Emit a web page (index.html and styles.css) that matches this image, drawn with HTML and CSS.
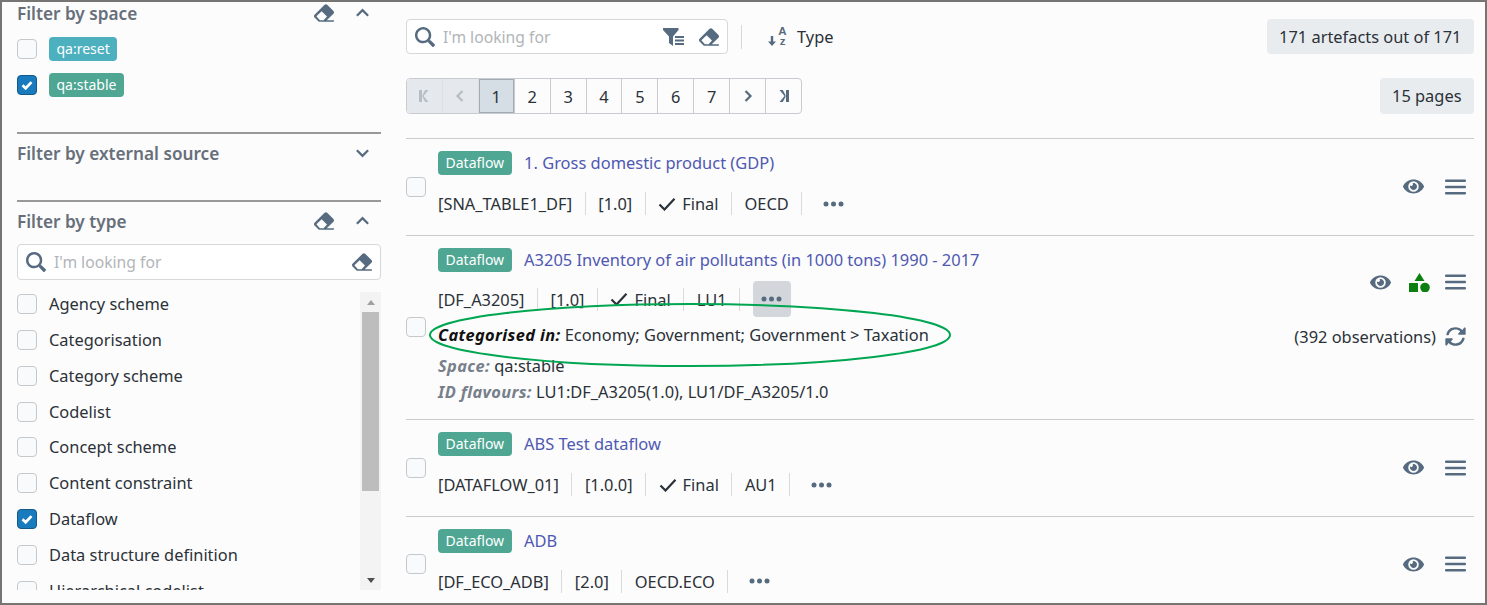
FILE: index.html
```html
<!DOCTYPE html>
<html lang="en">
<head>
    <meta charset="UTF-8">
    <meta name="viewport" content="width=device-width, initial-scale=1.0">
    <title>Artefacts</title>
    <link rel="stylesheet" href="styles.css">
</head>
<body>

<svg class="icon-defs" aria-hidden="true">
    <defs>
        <symbol id="i-eraser" viewBox="0 0 512 512"><path d="M497.941 273.941c18.745-18.745 18.745-49.137 0-67.882l-160-160c-18.745-18.745-49.137-18.745-67.882 0l-256 256c-18.745 18.745-18.745 49.137 0 67.882l96 96A48.004 48.004 0 0 0 144 480h356c6.627 0 12-5.373 12-12v-16c0-6.627-5.373-12-12-12H325.883l172.058-166.059zm-302.627-62.627l137.373 137.373L245.373 440H150.628l-90-104 134.686-124.686z"/></symbol>
        <symbol id="i-search" viewBox="0 0 512 512"><path d="M505 442.7L405.3 343c-4.5-4.5-10.6-7-17-7H372c27.6-35.3 44-79.7 44-128C416 93.1 322.9 0 208 0S0 93.1 0 208s93.1 208 208 208c48.3 0 92.7-16.4 128-44v16.3c0 6.4 2.5 12.5 7 17l99.7 99.7c9.4 9.4 24.6 9.4 33.9 0l28.3-28.3c9.4-9.4 9.4-24.6.1-34zM208 352c-79.7 0-144-64.2-144-144 0-79.7 64.2-144 144-144 79.700 0 144 64.200 144 144 0 79.700-64.300 144-144 144z"/></symbol>
        <symbol id="i-eye" viewBox="0 0 576 512"><path d="M572.52 241.4C518.29 135.59 410.93 64 288 64S57.68 135.64 3.48 241.41a32.35 32.35 0 0 0 0 29.19C57.71 376.41 165.07 448 288 448s230.32-71.64 284.52-177.41a32.35 32.35 0 0 0 0-29.19zM288 400a144 144 0 1 1 144-144 143.93 143.93 0 0 1-144 144zm0-240a95.31 95.31 0 0 0-25.31 3.79 47.85 47.85 0 0 1-66.9 66.9A95.78 95.78 0 1 0 288 160z"/></symbol>
        <symbol id="i-bars" viewBox="0 0 21 16"><rect x="0" y="0.500" width="21" height="2.400" rx="1"/><rect x="0" y="6.800" width="21" height="2.400" rx="1"/><rect x="0" y="13.100" width="21" height="2.400" rx="1"/></symbol>
        <symbol id="i-sync" viewBox="0 0 512 512"><path d="M370.72 133.28C339.458 104.008 298.888 87.962 255.848 88c-77.458.068-144.328 53.178-162.791 126.85-1.344 5.363-6.122 9.15-11.651 9.15H44.103c-7.498 0-13.194-6.807-11.807-14.176C53.933 94.924 134.813 28 256 28c66.448 0 126.791 26.136 171.315 68.685L463.03 40.97C478.149 25.851 504 36.559 504 57.941V192c0 13.255-10.745 24-24 24H345.941c-21.382 0-32.09-25.851-16.971-40.971l41.75-41.749zM32 296h134.059c21.382 0 32.09 25.851 16.971 40.971l-41.75 41.75c31.262 29.273 71.835 45.319 114.876 45.28 77.418-.07 144.315-53.144 162.787-126.849 1.344-5.363 6.122-9.15 11.651-9.15h37.304c7.498 0 13.194 6.807 11.807 14.176C458.067 397.076 377.187 484 256 484c-66.448 0-126.791-26.136-171.315-68.685L48.97 471.03C33.851 486.149 8 475.441 8 454.059V320c0-13.255 10.745-24 24-24z"/></symbol>
        <symbol id="i-tick" viewBox="0 0 18 14"><path d="M1.500 7.500l5 5L16.500 1.800" fill="none" stroke="currentColor" stroke-width="2.200"/></symbol>
        <symbol id="i-box-tick" viewBox="0 0 20 20"><path d="M5 10.300l3.500 3.300L15 6.800" fill="none" stroke="#fff" stroke-width="3"/></symbol>
        <symbol id="i-up" viewBox="0 0 16 10"><path d="M2 8l6-6 6 6" fill="none" stroke="currentColor" stroke-width="2.400"/></symbol>
        <symbol id="i-down" viewBox="0 0 16 10"><path d="M2 2l6 6 6-6" fill="none" stroke="currentColor" stroke-width="2.400"/></symbol>
        <symbol id="i-dots" viewBox="0 0 21 6"><circle cx="3" cy="3" r="2.500"/><circle cx="10.500" cy="3" r="2.500"/><circle cx="18" cy="3" r="2.500"/></symbol>
    </defs>
</svg>

<div class="frame">

    <aside class="sidebar">
        <section class="filter filter-first">
            <div class="filter-head">
                <span class="filter-title">Filter by space</span>
                <svg class="ico eraser"><use href="#i-eraser"/></svg>
                <svg class="ico chevron"><use href="#i-up"/></svg>
            </div>
            <div class="space-list">
                <div class="option">
                    <span class="check"></span>
                    <span class="tag tag-reset">qa:reset</span>
                </div>
                <div class="option">
                    <span class="check on"><svg><use href="#i-box-tick"/></svg></span>
                    <span class="tag tag-stable">qa:stable</span>
                </div>
            </div>
        </section>

        <section class="filter filter-closed">
            <div class="filter-head">
                <span class="filter-title">Filter by external source</span>
                <svg class="ico chevron"><use href="#i-down"/></svg>
            </div>
        </section>

        <section class="filter">
            <div class="filter-head">
                <span class="filter-title">Filter by type</span>
                <svg class="ico eraser"><use href="#i-eraser"/></svg>
                <svg class="ico chevron"><use href="#i-up"/></svg>
            </div>
            <div class="search search-side">
                <svg class="ico search-ico"><use href="#i-search"/></svg>
                <span class="placeholder">I'm looking for</span>
                <svg class="ico eraser"><use href="#i-eraser"/></svg>
            </div>
            <div class="list-box">
                <div class="type-list">
                    <div class="option"><span class="check"></span>Agency scheme</div>
                    <div class="option"><span class="check"></span>Categorisation</div>
                    <div class="option"><span class="check"></span>Category scheme</div>
                    <div class="option"><span class="check"></span>Codelist</div>
                    <div class="option"><span class="check"></span>Concept scheme</div>
                    <div class="option"><span class="check"></span>Content constraint</div>
                    <div class="option"><span class="check on"><svg><use href="#i-box-tick"/></svg></span>Dataflow</div>
                    <div class="option"><span class="check"></span>Data structure definition</div>
                    <div class="option"><span class="check"></span>Hierarchical codelist</div>
                </div>
                <div class="scrollbar">
                    <span class="arrow arrow-up"></span>
                    <span class="thumb"></span>
                    <span class="arrow arrow-down"></span>
                </div>
            </div>
        </section>
    </aside>

    <main class="content">
        <div class="toolbar">
            <div class="search search-main">
                <svg class="ico search-ico"><use href="#i-search"/></svg>
                <span class="placeholder">I'm looking for</span>
                <svg class="ico filter-ico" viewBox="0 0 22 18">
                    <path d="M0 0h15.500v2L10 8.500V18L6 15V8.500L0 2z"/>
                    <rect x="12" y="8" width="9" height="2"/>
                    <rect x="12" y="11.500" width="9" height="2"/>
                    <rect x="12" y="15" width="9" height="2"/>
                </svg>
                <svg class="ico eraser"><use href="#i-eraser"/></svg>
            </div>
            <span class="tool-sep"></span>
            <div class="sort-ico">
                <svg class="ico sort-arrow" viewBox="0 0 8 10"><path d="M2.800 0v5.500H0L4 10l4-4.500H5.200V0z"/></svg>
                <div class="sort-letters"><span class="sort-a">A</span><span class="sort-z">z</span></div>
            </div>
            <span class="sort-label">Type</span>
            <span class="count count-top">171 artefacts out of 171</span>
        </div>

        <div class="pager-row">
            <div class="pager">
                <span class="page page-off"><svg class="ico page-ico" viewBox="0 0 12 12"><path d="M1 0h3v12H1zM10.500 0L5.500 6l5 6H7.200L4.500 7V5l2.700-5z"/></svg></span>
                <span class="page page-off"><svg class="ico page-ico" viewBox="0 0 12 12"><path d="M8.500 1L3.500 6l5 5" fill="none" stroke="currentColor" stroke-width="2.200"/></svg></span>
                <span class="page page-now">1</span>
                <span class="page">2</span>
                <span class="page">3</span>
                <span class="page">4</span>
                <span class="page">5</span>
                <span class="page">6</span>
                <span class="page">7</span>
                <span class="page"><svg class="ico page-ico" viewBox="0 0 12 12"><path d="M3.500 1l5 5-5 5" fill="none" stroke="currentColor" stroke-width="2.200"/></svg></span>
                <span class="page"><svg class="ico page-ico" viewBox="0 0 12 12"><path d="M11 0H8v12h3zM1.500 0l5 6-5 6h3.300L7.500 7V5L4.800 0z"/></svg></span>
            </div>
            <span class="count">15 pages</span>
        </div>

        <div class="rows">
            <article class="row">
                <span class="check"></span>
                <div class="row-body">
                    <div class="row-title"><span class="tag tag-stable tag-type">Dataflow</span><a class="name">1. Gross domestic product (GDP)</a></div>
                    <div class="meta">
                        <span class="meta-item">[SNA_TABLE1_DF]</span>
                        <span class="meta-item">[1.0]</span>
                        <span class="meta-item"><svg class="tick"><use href="#i-tick"/></svg>Final</span>
                        <span class="meta-item">OECD</span>
                        <span class="more"><svg class="ico dots"><use href="#i-dots"/></svg></span>
                    </div>
                </div>
                <div class="actions">
                    <div class="action-icons">
                        <svg class="ico eye"><use href="#i-eye"/></svg>
                        <svg class="ico bars"><use href="#i-bars"/></svg>
                    </div>
                </div>
            </article>

            <article class="row row-open">
                <span class="check"></span>
                <div class="row-body">
                    <div class="row-title"><span class="tag tag-stable tag-type">Dataflow</span><a class="name">A3205 Inventory of air pollutants (in 1000 tons) 1990 - 2017</a></div>
                    <div class="meta">
                        <span class="meta-item">[DF_A3205]</span>
                        <span class="meta-item">[1.0]</span>
                        <span class="meta-item"><svg class="tick"><use href="#i-tick"/></svg>Final</span>
                        <span class="meta-item">LU1</span>
                        <span class="more more-active"><svg class="ico dots"><use href="#i-dots"/></svg></span>
                    </div>
                    <div class="details">
                        <p class="detail detail-main"><b>Categorised in:</b> Economy; Government; Government &gt; Taxation</p>
                        <p class="detail detail-space"><b>Space:</b> qa:stable</p>
                        <p class="detail"><b>ID flavours:</b> LU1:DF_A3205(1.0), LU1/DF_A3205/1.0</p>
                    </div>
                </div>
                <div class="actions">
                    <div class="action-icons">
                        <svg class="ico eye"><use href="#i-eye"/></svg>
                        <svg class="shapes" viewBox="0 0 21 19">
                            <path d="M10.500 0l5 8h-10z"/>
                            <rect x="0" y="10" width="9" height="9" rx="0.500"/>
                            <circle cx="16" cy="14.500" r="4.800"/>
                        </svg>
                        <svg class="ico bars"><use href="#i-bars"/></svg>
                    </div>
                    <div class="observations">(392 observations)<svg class="ico sync"><use href="#i-sync"/></svg></div>
                </div>
            </article>

            <article class="row">
                <span class="check"></span>
                <div class="row-body">
                    <div class="row-title"><span class="tag tag-stable tag-type">Dataflow</span><a class="name">ABS Test dataflow</a></div>
                    <div class="meta">
                        <span class="meta-item">[DATAFLOW_01]</span>
                        <span class="meta-item">[1.0.0]</span>
                        <span class="meta-item"><svg class="tick"><use href="#i-tick"/></svg>Final</span>
                        <span class="meta-item">AU1</span>
                        <span class="more"><svg class="ico dots"><use href="#i-dots"/></svg></span>
                    </div>
                </div>
                <div class="actions">
                    <div class="action-icons">
                        <svg class="ico eye"><use href="#i-eye"/></svg>
                        <svg class="ico bars"><use href="#i-bars"/></svg>
                    </div>
                </div>
            </article>

            <article class="row">
                <span class="check"></span>
                <div class="row-body">
                    <div class="row-title"><span class="tag tag-stable tag-type">Dataflow</span><a class="name">ADB</a></div>
                    <div class="meta">
                        <span class="meta-item">[DF_ECO_ADB]</span>
                        <span class="meta-item">[2.0]</span>
                        <span class="meta-item">OECD.ECO</span>
                        <span class="more"><svg class="ico dots"><use href="#i-dots"/></svg></span>
                    </div>
                </div>
                <div class="actions">
                    <div class="action-icons">
                        <svg class="ico eye"><use href="#i-eye"/></svg>
                        <svg class="ico bars"><use href="#i-bars"/></svg>
                    </div>
                </div>
            </article>
        </div>
    </main>

    <!-- green annotation drawn over the screenshot -->
    <svg class="annotation" viewBox="0 0 526 68">
        <ellipse cx="263" cy="34" rx="260" ry="31"/>
    </svg>
</div>

</body>
</html>
```

FILE: styles.css
```css
* {
    box-sizing: border-box;
}

body {
    margin: 0;
    font-family: "Noto Sans", "Open Sans", sans-serif;
    font-size: 16.4px;
    color: #2b3138;
    background-color: #fcfcfc;
}

p {
    margin: 0;
}

.icon-defs {
    display: none;
}

.ico {
    display: block;
    flex: none;
    fill: #566b80;
    color: #566b80;
}

/* Outer frame with the grey screenshot border */
.frame {
    position: relative;
    display: flex;
    height: 605px;
    padding-left: 15px;
    border: 2px solid #777474;
    overflow: hidden;
}

/* Sidebar filters */
.sidebar {
    flex: none;
    width: 364px;
}

.filter {
    padding-top: 7px;
    border-top: 2px solid #999;
}

.filter-first {
    height: 131px;
    padding-top: 0;
    border-top: none;
}

.filter-first .filter-head {
    margin-top: -1px;
}

.filter-closed {
    height: 68px;
}

.filter-head {
    display: flex;
    align-items: center;
    height: 24px;
}

.filter-title {
    flex: 1;
    font-size: 17.2px;
    font-weight: 600;
    color: #666f7a;
}

.eraser {
    width: 20px;
    height: 20px;
}

.filter-head .eraser {
    margin-right: 21px;
}

.chevron {
    width: 15px;
    height: 10px;
    margin-right: 11px;
}

.space-list {
    display: flex;
    flex-direction: column;
    gap: 12px;
    margin-top: 12px;
}

.option {
    display: flex;
    align-items: center;
    min-height: 24px;
}

.check {
    display: block;
    flex: none;
    width: 20px;
    height: 20px;
    background-color: #f9fafb;
    border: 1px solid #c6c9cc;
    border-radius: 4px;
}

.check.on {
    background-color: #187bbd;
    border-color: #14598a;
}

.check svg {
    display: block;
    width: 18px;
    height: 18px;
}

.tag {
    display: block;
    height: 24px;
    margin-left: 12px;
    padding: 0 7.5px;
    font-size: 14px;
    line-height: 24px;
    color: #fff;
    border-radius: 4px;
}

.tag-reset {
    background-color: #4cb0bf;
}

.tag-stable {
    background-color: #4ea693;
}

.search {
    display: flex;
    align-items: center;
    height: 36px;
    background-color: #fff;
    border: 1px solid #d5d8db;
    border-radius: 4px;
}

.search-side {
    margin-top: 11px;
    padding: 0 8px;
}

.search-ico {
    width: 20px;
    height: 20px;
}

.placeholder {
    flex: 1;
    margin-left: 8px;
    font-size: 15.7px;
    color: #b1b5b9;
}

.list-box {
    display: flex;
    height: 298px;
    margin-top: 12px;
    overflow: hidden;
}

.type-list {
    display: flex;
    flex: 1;
    flex-direction: column;
    gap: 15.85px;
    padding-top: 2px;
}

.type-list .option {
    flex: none;
    align-items: flex-start;
    height: 20px;
    min-height: 20px;
    line-height: 20px;
}

.type-list .check {
    margin-right: 12px;
}

.scrollbar {
    display: flex;
    flex: none;
    flex-direction: column;
    justify-content: space-between;
    width: 21px;
    background-color: #f3f3f3;
}

.arrow {
    display: block;
    width: 0;
    height: 0;
    margin: 7.5px auto;
    border-left: 4px solid transparent;
    border-right: 4px solid transparent;
}

.arrow-up {
    border-bottom: 5px solid #a0a0a0;
}

.arrow-down {
    border-top: 5px solid #505050;
}

.thumb {
    display: block;
    width: 17px;
    height: 179px;
    margin: 0 auto 79px;
    background-color: #bdbdbd;
}

/* Main column */
.content {
    flex: none;
    width: 1068px;
    margin-left: 25px;
    padding-top: 17px;
}

.toolbar,
.pager-row {
    display: flex;
    align-items: center;
}

.search-main {
    width: 322px;
    height: 35px;
    padding: 0 8px;
}

.filter-ico {
    width: 22px;
    height: 18px;
    margin-right: 14px;
}

.tool-sep {
    width: 1px;
    height: 24px;
    margin: 0 26px 0 13px;
    background-color: #d5d8db;
}

.sort-ico {
    display: flex;
    align-items: flex-end;
    width: 20px;
    height: 20px;
}

.sort-arrow {
    width: 8px;
    height: 10px;
    margin-bottom: 1px;
}

.sort-letters {
    display: flex;
    flex-direction: column;
    align-items: center;
    width: 11px;
    margin-left: 1px;
    font-family: "Liberation Sans", sans-serif;
    font-weight: 700;
    font-size: 11.5px;
    line-height: 10.5px;
    color: #566b80;
}

.sort-label {
    flex: 1;
    margin-left: 9px;
}

.count {
    height: 36px;
    padding: 0 12.5px;
    line-height: 36px;
    background-color: #e9ecef;
    border-radius: 4px;
}

.count-top {
    height: 35px;
    line-height: 35px;
}

.pager-row {
    justify-content: space-between;
    margin-top: 24px;
}

.pager {
    display: flex;
    width: 396px;
    height: 36px;
    border: 1px solid #c8ccd0;
    border-radius: 4px;
    overflow: hidden;
}

.page {
    display: flex;
    flex: 1;
    align-items: center;
    justify-content: center;
    border-right: 1px solid #c8ccd0;
}

.page:last-child {
    border-right: none;
}

.page-off {
    background-color: #e5e9ee;
    border-right-color: #dde1e5;
}

.page-off .ico {
    color: #b4bcc4;
    fill: #b4bcc4;
}

.page-now {
    background-color: #d5dde5;
    box-shadow: inset 0 0 0 1px #a2abb4;
}

.page-ico {
    width: 12px;
    height: 12px;
}

/* Artefact rows */
.rows {
    margin-top: 24px;
}

.row {
    display: flex;
    align-items: center;
    border-top: 1px solid #ccc;
}

.row-body {
    flex: 1;
    padding: 12px 0 19.5px 12px;
}

.row-open .row-body {
    padding-bottom: 14.5px;
}

.row-title {
    display: flex;
    align-items: center;
    height: 24px;
}

.tag-type {
    margin-left: 0;
}

.name {
    margin: 0 0 0 12.5px;
    font-size: 16.45px;
    line-height: 20px;
    color: #4f58b2;
}

.meta {
    display: flex;
    align-items: center;
    height: 23px;
    margin-top: 17px;
}

.row-open .meta {
    margin-top: 16px;
}

.meta-item {
    display: flex;
    align-items: center;
    height: 23px;
    padding-right: 12.5px;
    margin-right: 12.5px;
    border-right: 1px solid #d8dadc;
}

.tick {
    width: 18px;
    height: 14px;
    margin-right: 6px;
    color: #2b3138;
}

.more {
    display: flex;
    flex: none;
    align-items: center;
    justify-content: center;
    width: 38px;
    height: 36px;
    border-radius: 4px;
}

.more-active {
    background-color: #d3d7db;
}

.dots {
    width: 21px;
    height: 6px;
}

.details {
    margin-top: 11px;
}

.detail {
    height: 26px;
    line-height: 26px;
}

.detail b {
    font-style: italic;
    font-weight: 700;
    letter-spacing: 0.35px;
    color: #77808a;
}

.detail-main b {
    color: #111;
}

.detail-space {
    margin-top: 5px;
}

.actions {
    display: flex;
    flex: none;
    flex-direction: column;
    align-items: flex-end;
    padding-right: 8px;
}

.row-open .actions {
    padding-bottom: 34px;
}

.action-icons {
    display: flex;
    align-items: center;
}

.eye {
    width: 21px;
    height: 19px;
    margin-right: 21px;
}

.row-open .eye {
    margin-right: 18px;
}

.shapes {
    display: block;
    width: 21px;
    height: 19px;
    margin-right: 15px;
    fill: #0b7f10;
}

.bars {
    width: 21px;
    height: 16px;
}

.observations {
    display: flex;
    align-items: center;
    gap: 9px;
    margin-top: 33px;
}

.sync {
    width: 21px;
    height: 21px;
}

/* Annotation ellipse */
.annotation {
    position: absolute;
    left: 425px;
    top: 299px;
    width: 526px;
    height: 68px;
    fill: none;
    stroke: #00a651;
    stroke-width: 2;
}
```
